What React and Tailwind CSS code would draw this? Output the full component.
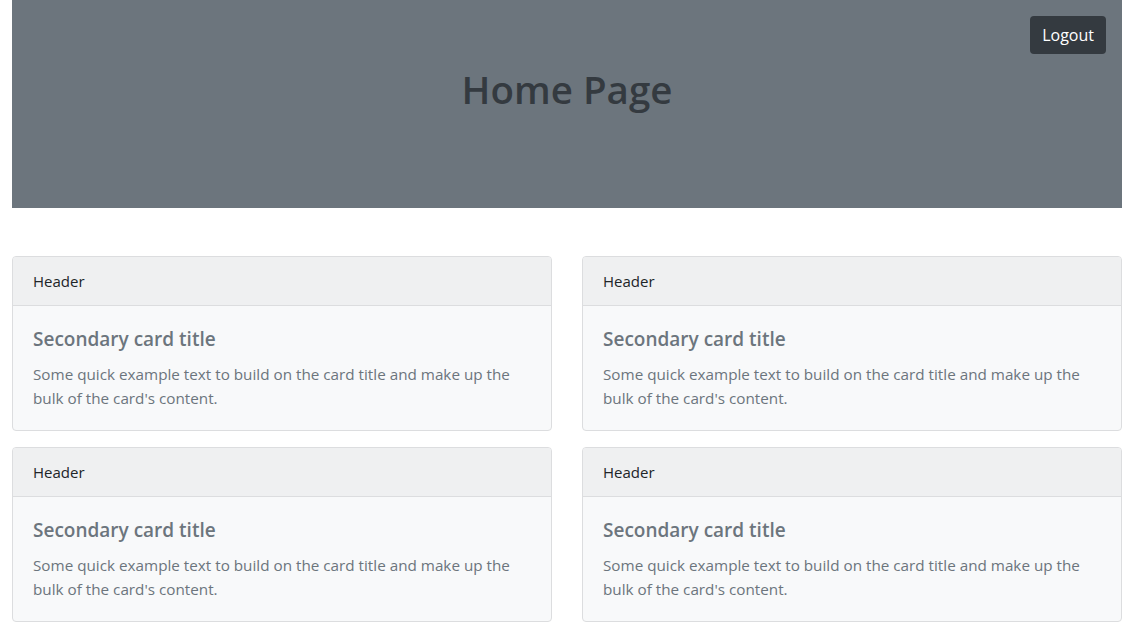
export default function App() {
  const cards = [1, 2, 3, 4]

  return (
    <div
      className="min-h-screen bg-white text-[#212529]"
      style={{ fontFamily: '"Open Sans", "Noto Sans", sans-serif' }}
    >
      <div className="ml-[12px] w-[1110px]">
        {/* Jumbotron */}
        <header className="relative flex h-[208px] items-start justify-center bg-[#6c757d]">
          <h1 className="mt-[66px] text-[38.5px] font-semibold leading-[1.2] text-[#343a40]">
            Home Page
          </h1>
          <button className="absolute right-[16px] top-[16px] rounded-[4px] bg-[#343a40] px-[12px] py-[6px] text-[16px] leading-[26px] text-white">
            Logout
          </button>
        </header>

        {/* Cards */}
        <div className="mt-[48px] grid grid-cols-2 gap-x-[30px] gap-y-[16px]">
          {cards.map((c) => (
            <div
              key={c}
              className="overflow-hidden rounded-[4px] border border-[#dcdddf] bg-[#f8f9fa]"
            >
              <div className="border-b border-[#dcdddf] bg-[#eff0f1] px-[20px] py-[12px] text-[15px] leading-[24px] text-[#212529]">
                Header
              </div>
              <div className="p-[20px]">
                <h5 className="mb-[12px] pt-[1px] text-[19px] font-semibold leading-[24px] text-[#6c757d]">
                  Secondary card title
                </h5>
                <p className="-mt-[1px] text-[15.25px] leading-[24px] text-[#6c757d]">
                  Some quick example text to build on the card title and make up the bulk of the
                  card's content.
                </p>
              </div>
            </div>
          ))}
        </div>
      </div>
    </div>
  )
}
